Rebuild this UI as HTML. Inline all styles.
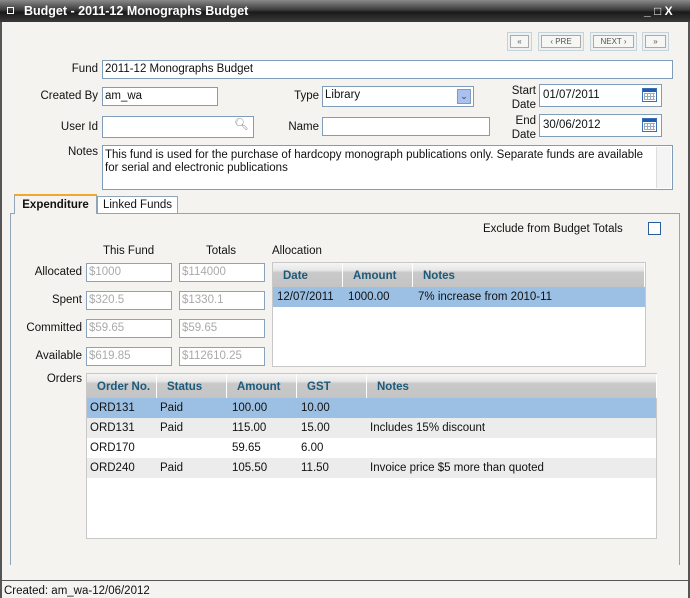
<!DOCTYPE html><html><head><style>
*{margin:0;padding:0;box-sizing:border-box}
body{width:690px;height:598px;background:#f4f3ef;font-family:"Liberation Sans",sans-serif;font-size:11.5px;color:#111;position:relative;overflow:hidden}
.a{position:absolute;white-space:nowrap}
.title{left:0;top:0;width:690px;height:22px;background:linear-gradient(#8a8a8a,#3b3b3b 45%,#1a1a1a 55%,#3a3a3a);color:#fff;font-weight:bold;font-size:12.5px;line-height:22px;padding-left:24px}
.inp{position:absolute;background:#fff;border:1px solid #7f9db9;height:19px;line-height:17px;padding-left:2px;white-space:nowrap}
.r{text-align:right}
.dis{color:#aaa;border-color:#8aa3bc}
.btn{position:absolute;border:1px solid #c4d4da;background:#eef1ef;height:19px;top:32px;font-size:8px;color:#555;text-align:center;line-height:17px}
.btn span{display:block;margin:2px;border:1px solid #aaa;height:13px;line-height:11px;background:#f6f6f4}
.grid{position:absolute;background:#fff;border:1px solid #c8c8c8}
.gh{height:24px;background:linear-gradient(#f5f5f5,#e6e6e6 30%,#c9c9c9 40%,#c4c4c4);position:relative}
.gh div{position:absolute;top:0;height:24px;line-height:26px;color:#1d5a7a;font-weight:bold;border-right:1px solid #fff;padding-left:10px}
.row{position:relative;height:20px;line-height:20px}
.row span{position:absolute}
.cal{position:absolute;width:15px;height:14px;background:linear-gradient(#1d5cb3 0 3px,#fff 3px);border:1px solid #3a6fb5}
.cal:after{content:"";position:absolute;left:1px;top:4px;width:11px;height:7px;background:repeating-linear-gradient(90deg,#9ab 0 1px,transparent 1px 3px),repeating-linear-gradient(#9ab 0 1px,transparent 1px 3px)}
</style></head><body>
<div class="a" style="left:0;top:22px;width:2px;height:576px;background:#555"></div>
<div class="a" style="left:688px;top:22px;width:2px;height:576px;background:#555"></div>
<div class="a title">Budget - 2011-12 Monographs Budget</div>
<div class="a" style="left:7px;top:7px;width:7px;height:7px;border:1px solid #fff"></div>
<div class="a" style="left:644px;top:4px;color:#fff;font-weight:bold;font-size:12px">_ □ X</div>

<div class="btn" style="left:507px;width:25px"><span>«</span></div>
<div class="btn" style="left:538px;width:46px"><span>‹ PRE</span></div>
<div class="btn" style="left:590px;width:47px"><span>NEXT ›</span></div>
<div class="btn" style="left:642px;width:27px"><span>»</span></div>

<div class="a r" style="left:40px;width:58px;top:63px">Fund</div>
<div class="inp" style="left:102px;top:60px;width:571px">2011-12 Monographs Budget</div>
<div class="a r" style="left:10px;width:88px;top:90px">Created By</div>
<div class="inp" style="left:102px;top:87px;width:116px">am_wa</div>
<div class="a r" style="left:270px;width:49px;top:90px">Type</div>
<div class="inp" style="left:322px;top:86px;width:152px;height:21px">Library<div style="position:absolute;right:2px;top:2px;width:14px;height:15px;background:#a9c1ee;border:1px solid #7f9db9;color:#345;font-size:9px;text-align:center;line-height:13px">⌄</div></div>
<div class="a r" style="left:500px;width:36px;top:84px;line-height:14px">Start<br>Date</div>
<div class="inp" style="left:539px;top:84px;width:123px;height:23px;line-height:21px;padding-left:3px">01/07/2011</div>
<div class="cal" style="left:642px;top:88px"></div>
<div class="a r" style="left:40px;width:58px;top:121px">User Id</div>
<div class="inp" style="left:102px;top:116px;width:152px;height:22px"><span style="position:absolute;left:131px;top:0;color:#888">🔍︎</span></div>
<div class="a r" style="left:270px;width:49px;top:121px">Name</div>
<div class="inp" style="left:322px;top:117px;width:168px">&nbsp;</div>
<div class="a r" style="left:500px;width:36px;top:114px;line-height:14px">End<br>Date</div>
<div class="inp" style="left:539px;top:114px;width:123px;height:23px;line-height:21px;padding-left:3px">30/06/2012</div>
<div class="cal" style="left:642px;top:118px"></div>
<div class="a r" style="left:40px;width:58px;top:146px">Notes</div>
<div class="inp" style="left:102px;top:145px;width:571px;height:45px;line-height:13px;padding-top:3px;white-space:normal;padding-right:16px">This fund is used for the purchase of hardcopy monograph publications only. Separate funds are available for serial and electronic publications<div style="position:absolute;right:1px;top:1px;width:15px;height:41px;background:#f4f4f4;border-left:1px solid #ddd"></div></div>

<div class="a" style="left:10px;top:213px;width:670px;height:352px;border:1px solid #8fa6b8;border-bottom:none"></div>
<div class="a" style="left:14px;top:194px;width:83px;height:20px;background:#f4f3ef;border:1px solid #8fa6b8;border-top:2px solid #f0a830;border-bottom:none;font-weight:bold;text-align:center;line-height:18px">Expenditure</div>
<div class="a" style="left:97px;top:196px;width:81px;height:17px;background:#fff;border:1px solid #8fa6b8;border-bottom:none;text-align:center;line-height:17px">Linked Funds</div>

<div class="a" style="left:483px;top:223px">Exclude from Budget Totals</div>
<div class="a" style="left:648px;top:222px;width:13px;height:13px;border:1px solid #2a5c9a;background:#fff"></div>
<div class="a" style="left:103px;top:245px">This Fund</div>
<div class="a" style="left:206px;top:245px">Totals</div>
<div class="a" style="left:272px;top:245px">Allocation</div>

<div class="a r" style="left:10px;width:72px;top:266px">Allocated</div>
<div class="inp dis" style="left:86px;top:263px;width:86px">$1000</div>
<div class="inp dis" style="left:179px;top:263px;width:86px">$114000</div>
<div class="a r" style="left:10px;width:72px;top:294px">Spent</div>
<div class="inp dis" style="left:86px;top:291px;width:86px">$320.5</div>
<div class="inp dis" style="left:179px;top:291px;width:86px">$1330.1</div>
<div class="a r" style="left:10px;width:72px;top:322px">Committed</div>
<div class="inp dis" style="left:86px;top:319px;width:86px">$59.65</div>
<div class="inp dis" style="left:179px;top:319px;width:86px">$59.65</div>
<div class="a r" style="left:10px;width:72px;top:350px">Available</div>
<div class="inp dis" style="left:86px;top:347px;width:86px">$619.85</div>
<div class="inp dis" style="left:179px;top:347px;width:86px">$112610.25</div>

<div class="grid" style="left:272px;top:262px;width:374px;height:105px">
<div class="gh"><div style="left:0;width:70px">Date</div><div style="left:70px;width:70px">Amount</div><div style="left:140px;width:232px">Notes</div></div>
<div class="row" style="background:#9cc0e3"><span style="left:4px">12/07/2011</span><span style="left:75px">1000.00</span><span style="left:145px">7% increase from 2010-11</span></div>
</div>

<div class="a r" style="left:10px;width:72px;top:373px">Orders</div>
<div class="grid" style="left:86px;top:373px;width:571px;height:166px">
<div class="gh"><div style="left:0;width:70px">Order No.</div><div style="left:70px;width:70px">Status</div><div style="left:140px;width:70px">Amount</div><div style="left:210px;width:70px">GST</div><div style="left:280px;width:290px">Notes</div></div>
<div class="row" style="background:#9cc0e3"><span style="left:3px">ORD131</span><span style="left:73px">Paid</span><span style="left:145px">100.00</span><span style="left:214px">10.00</span></div>
<div class="row" style="background:#ececec"><span style="left:3px">ORD131</span><span style="left:73px">Paid</span><span style="left:145px">115.00</span><span style="left:214px">15.00</span><span style="left:283px">Includes 15% discount</span></div>
<div class="row"><span style="left:3px">ORD170</span><span style="left:145px">59.65</span><span style="left:214px">6.00</span></div>
<div class="row" style="background:#ececec"><span style="left:3px">ORD240</span><span style="left:73px">Paid</span><span style="left:145px">105.50</span><span style="left:214px">11.50</span><span style="left:283px">Invoice price $5 more than quoted</span></div>
</div>

<div class="a" style="left:0;top:580px;width:690px;height:1px;background:#555"></div>
<div class="a" style="left:4px;top:585px">Created: am_wa-12/06/2012</div>
</body></html>
